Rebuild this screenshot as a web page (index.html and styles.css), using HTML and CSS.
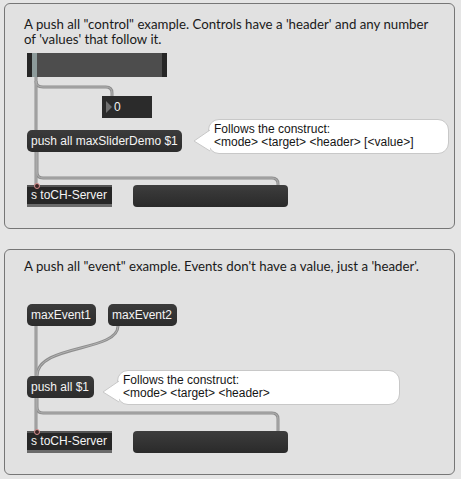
FILE: index.html
```html
<!DOCTYPE html>
<html>
<head>
<meta charset="utf-8">
<link rel="stylesheet" href="styles.css">
</head>
<body>
<div class="page">
  <section class="panel panel-control">
    <p class="desc">A push all "control" example. Controls have a 'header' and any number of 'values' that follow it.</p>
    <svg class="cords" width="450" height="225" viewBox="0 0 450 225">
      <g class="cord-outer">
        <path d="M31,73 L31,182"/>
        <path d="M31,77 Q31,83 38,83 L101,83 Q107,83 107,89 L107,92"/>
        <path d="M32,148 L32,168 Q32,174 38,174 L267,174 Q273,174 273,180 L273,182"/>
      </g>
      <g class="cord-inner">
        <path d="M31,73 L31,182"/>
        <path d="M31,77 Q31,83 38,83 L101,83 Q107,83 107,89 L107,92"/>
        <path d="M32,148 L32,168 Q32,174 38,174 L267,174 Q273,174 273,180 L273,182"/>
      </g>
    </svg>
    <div class="slider"><span class="knob"></span></div>
    <div class="number"><span class="tri"></span><span class="num">0</span></div>
    <div class="msg push1">push all maxSliderDemo $1</div>
    <div class="bubble bubble1">
      <svg class="pointer" width="18" height="24" viewBox="0 0 18 24"><path d="M17,2 L1,13 L17,23" /></svg>
      <span>Follows the construct:</span>
      <span>&lt;mode&gt; &lt;target&gt; &lt;header&gt; [&lt;value&gt;]</span>
    </div>
    <div class="send"><span class="inlet"></span>s toCH-Server</div>
    <div class="bar"></div>
  </section>

  <section class="panel panel-event">
    <p class="desc">A push all "event" example. Events don't have a value, just a 'header'.</p>
    <svg class="cords" width="450" height="224" viewBox="0 0 450 224">
      <g class="cord-outer">
        <path d="M31,76 L31,182"/>
        <path d="M113,76 C113,102 32,94 32,126"/>
        <path d="M32,148 L32,157 Q32,163 38,163 L267,163 Q273,163 273,169 L273,182"/>
      </g>
      <g class="cord-inner">
        <path d="M31,76 L31,182"/>
        <path d="M113,76 C113,102 32,94 32,126"/>
        <path d="M32,148 L32,157 Q32,163 38,163 L267,163 Q273,163 273,169 L273,182"/>
      </g>
    </svg>
    <div class="msg ev1">maxEvent1</div>
    <div class="msg ev2">maxEvent2</div>
    <div class="msg push2">push all $1</div>
    <div class="bubble bubble2">
      <svg class="pointer" width="18" height="24" viewBox="0 0 18 24"><path d="M17,2 L1,13 L17,23" /></svg>
      <span>Follows the construct:</span>
      <span>&lt;mode&gt; &lt;target&gt; &lt;header&gt;</span>
    </div>
    <div class="send"><span class="inlet"></span>s toCH-Server</div>
    <div class="bar"></div>
  </section>
</div>
</body>
</html>
```

FILE: styles.css
```css
html, body {
  margin: 0;
  padding: 0;
  background: #e5e5e5;
}
.page {
  padding: 3px 0 0 4px;
  display: flex;
  flex-direction: column;
  gap: 20px;
}
.panel {
  position: relative;
  box-sizing: border-box;
  width: 451px;
  border: 1px solid #767676;
  border-radius: 6px;
  background: #e1e1e1;
  font-family: Lato, "Open Sans", sans-serif;
}
.panel-control { height: 226px; }
.panel-event { height: 226px; }
.desc {
  margin: 0;
  padding: 13px 20px 0 19px;
  font-size: 13.25px;
  line-height: 15px;
  color: #1a1a1a;
}
.panel-event .desc { padding-top: 9px; }
.cords {
  position: absolute;
  left: 0;
  top: 0;
  fill: none;
}
.cord-outer path { stroke: #8e8e8e; stroke-width: 3; fill: none; }
.cord-inner path { stroke: #b2b2b2; stroke-width: 1; fill: none; }

.slider {
  position: absolute;
  left: 22px; top: 49px;
  width: 140px; height: 24px;
  box-sizing: border-box;
  background: #4d4d4d;
  border-left: 5px solid #262626;
  border-right: 5px solid #262626;
}
.slider .knob {
  position: absolute;
  left: 0; top: 0;
  width: 5px; height: 24px;
  background: #8d9b9b;
}
.number {
  position: absolute;
  left: 97px; top: 92px;
  width: 50px; height: 22px;
  background: #2b2b2b;
  font-family: "Liberation Sans", Arial, sans-serif;
  color: #f2f2f2;
  font-size: 12px;
}
.number .tri {
  position: absolute;
  left: 4px; top: 5px;
  width: 0; height: 0;
  border-top: 6px solid transparent;
  border-bottom: 6px solid transparent;
  border-left: 6px solid #707070;
}
.number .num {
  position: absolute;
  left: 12px; top: 3px;
  line-height: 16px;
}
.msg {
  position: absolute;
  height: 22px;
  box-sizing: border-box;
  padding: 0 4px;
  border-radius: 5px;
  background: linear-gradient(#3b3b3b, #2c2c2c);
  color: #f4f4f4;
  font-family: "Liberation Sans", Arial, sans-serif;
  font-size: 12px;
  line-height: 22px;
  white-space: nowrap;
}
.push1 { left: 22px; top: 126px; width: 155px; }
.ev1 { left: 22px; top: 54px; width: 69px; }
.ev2 { left: 103px; top: 54px; width: 69px; }
.push2 { left: 22px; top: 126px; width: 67px; }

.bubble {
  position: absolute;
  box-sizing: border-box;
  background: #ffffff;
  border: 1px solid #c8c8c8;
  border-radius: 11px;
  padding: 3px 0 0 5px;
  display: flex;
  flex-direction: column;
  font-family: "Liberation Sans", Arial, sans-serif;
  font-size: 12px;
  line-height: 13px;
  color: #151515;
  white-space: nowrap;
}
.bubble .pointer {
  position: absolute;
  left: -16px;
  top: 8px;
}
.bubble .pointer path {
  fill: #ffffff;
  stroke: #c8c8c8;
  stroke-width: 1;
}
.bubble1 { left: 203px; top: 115px; width: 241px; height: 35px; }
.bubble2 { left: 112px; top: 120px; width: 283px; height: 35px; }

.send {
  position: absolute;
  left: 22px; top: 181px;
  width: 85px; height: 22px;
  box-sizing: border-box;
  background: #262626;
  border-top: 2px solid #555;
  border-bottom: 3px solid #6a6a6a;
  color: #f4f4f4;
  font-family: "Liberation Sans", Arial, sans-serif;
  font-size: 12px;
  line-height: 17px;
  padding-left: 4px;
  white-space: nowrap;
}
.send .inlet {
  position: absolute;
  left: 7px; top: -4px;
  width: 4px; height: 4px;
  border-radius: 50%;
  background: #3a2626;
  border: 1px solid #d89090;
}
.bar {
  position: absolute;
  left: 128px; top: 181px;
  width: 155px; height: 22px;
  border-radius: 4px;
  background: linear-gradient(#3d3d3d, #2a2a2a);
}
```
